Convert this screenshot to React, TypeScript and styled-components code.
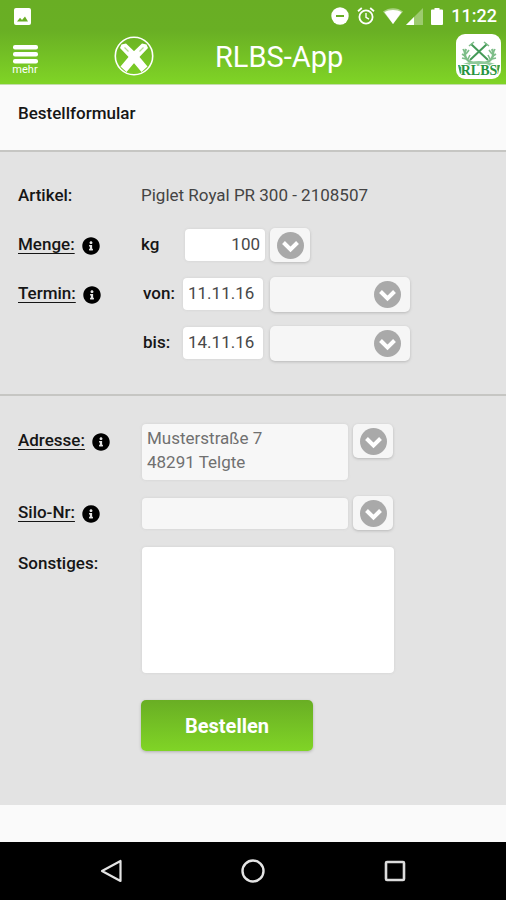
import React from 'react';
import styled, { createGlobalStyle, css } from 'styled-components';
import { FaInfoCircle } from 'react-icons/fa';

const GlobalStyle = createGlobalStyle`
  *, *::before, *::after { box-sizing: border-box; }
  body {
    margin: 0;
    background: #fafafa;
    color: #161616;
    font-family: Roboto, "Liberation Sans", sans-serif;
    font-size: 17px;
    line-height: 24px;
  }
  button, input, select, textarea { font: inherit; color: inherit; }
`;

const Page = styled.div`
  min-height: 100vh;
  display: flex;
  flex-direction: column;
`;

const TopArea = styled.header`
  background: linear-gradient(#69ae24 0, #69af24 36%, #80d426 100%);
  color: #fff;
  border-bottom: 1px solid #c3dcab;
`;

const StatusBar = styled.div`
  height: 32px;
  padding: 0 9px 0 14px;
  display: flex;
  align-items: center;
  justify-content: space-between;
`;

const StatusIcons = styled.div`
  display: flex;
  align-items: center;
  gap: 8px;
  font-size: 18px;
  font-weight: 500;
`;

const SignalGroup = styled.span`
  display: flex;
  gap: 3px;
`;

const AppBar = styled.div`
  height: 52px;
  padding: 0 5px 4px 12px;
  display: flex;
  align-items: center;
`;

const MenuButton = styled.button`
  width: 26px;
  padding: 8px 0 0;
  border: 0;
  background: none;
  color: #fff;
  display: flex;
  flex-direction: column;
  align-items: center;
  font-size: 11px;
  line-height: 11px;
  cursor: pointer;
`;

const Brand = styled.span`
  display: flex;
  margin-left: 76px;
`;

const Title = styled.h1`
  flex: 1;
  margin: 0 0 0 61px;
  padding-top: 1px;
  font-size: 29px;
  line-height: 36px;
  font-weight: 400;
`;

const PageHeading = styled.h2`
  margin: 0;
  padding: 16px 18px 24px;
  height: 65px;
  font-size: 17px;
  line-height: 24px;
  font-weight: 500;
  background: #fafafa;
`;

const Section = styled.section<{ $last?: boolean }>`
  display: flex;
  flex-direction: column;
  align-items: stretch;
  background: #e3e3e3;
  border-top: 2px solid #c6c6c3;
  padding: ${p => (p.$last ? '28px 18px 54px' : '27px 18px 33px')};
  gap: ${p => (p.$last ? '16px' : '14px')};
`;

const Row = styled.div`
  display: grid;
  grid-template-columns: 123px minmax(0, 1fr);
  align-items: start;
`;

const LabelCell = styled.div`
  display: flex;
  align-items: center;
  gap: 7px;
  padding-top: 4px;
`;

const Label = styled.label<{ $linked?: boolean }>`
  font-weight: 500;
  line-height: 24px;
  ${p => p.$linked && css`
    text-decoration: underline;
    text-decoration-thickness: 1px;
    text-underline-offset: 3px;
    text-decoration-skip-ink: none;
  `}
`;

const InfoButton = styled.button`
  display: flex;
  padding: 4px 0 0;
  border: 0;
  background: none;
  color: #000;
  font-size: 18px;
  cursor: pointer;
`;

const Fields = styled.div`
  display: flex;
  align-items: flex-start;
  min-height: 35px;
`;

const Value = styled.span`
  padding-top: 4px;
  color: #444;
`;

const UnitLabel = styled.label`
  width: 42px;
  padding-top: 4px;
  font-weight: 500;
`;

const DateLabel = styled(UnitLabel)`
  padding-left: 2px;
`;

const fieldLook = css`
  border: 0;
  border-radius: 4px;
  outline: 0;
  box-shadow: 0 0 3px #d0d0d0;
  color: #484848;
`;

const TextField = styled.input<{ $right?: boolean }>`
  ${fieldLook}
  width: 80px;
  height: 32px;
  margin: 1px 7px 0 0;
  padding: 0 5px 3px;
  background: #fff;
  text-align: ${p => (p.$right ? 'right' : 'left')};
  ${p => p.$right && css`margin-left: 2px; margin-right: 5px;`}
`;

const ReadOnlyArea = styled.textarea`
  ${fieldLook}
  flex: 0 1 206px;
  min-width: 0;
  height: 56px;
  margin: 0 5px 0 1px;
  padding: 2px 5px;
  background: #f7f7f7;
  color: #707070;
  resize: none;
  overflow: hidden;
`;

const ReadOnlyField = styled.input`
  ${fieldLook}
  flex: 0 1 206px;
  min-width: 0;
  height: 31px;
  margin: 2px 5px 0 1px;
  padding: 0 5px;
  background: #f7f7f7;
`;

const NotesArea = styled.textarea`
  ${fieldLook}
  flex: 0 1 252px;
  min-width: 0;
  height: 126px;
  margin-left: 1px;
  padding: 5px;
  background: #fff;
  resize: none;
`;

const raised = css`
  border: 0;
  border-radius: 5px;
  background: #f6f6f6;
  box-shadow: 0 1px 3px #b8b8b8;
  cursor: pointer;
`;

const ArrowButton = styled.button`
  ${raised}
  width: 40px;
  height: 34px;
  padding: 0;
  display: flex;
  align-items: center;
  justify-content: center;
`;

const SelectWrap = styled.div`
  display: grid;
  align-items: center;
  flex: 0 1 140px;
  > * { grid-area: 1 / 1; }
  > svg { justify-self: end; margin-right: 9px; pointer-events: none; z-index: 1; }
`;

const Select = styled.select`
  ${raised}
  appearance: none;
  width: 100%;
  height: 35px;
  padding: 0 42px 0 8px;
`;

const SubmitButton = styled.button`
  flex: 0 1 172px;
  height: 51px;
  margin-top: 11px;
  border: 0;
  border-radius: 5px;
  background: linear-gradient(#69ae24, #80d426);
  box-shadow: 0 1px 3px #b0b0b0;
  color: #fff;
  font-size: 20px;
  font-weight: 700;
  cursor: pointer;
`;

const BottomStrip = styled.div`
  flex: 1;
  min-height: 20px;
  background: #fafafa;
`;

const NavBar = styled.nav`
  height: 58px;
  background: #000;
  display: flex;
  align-items: center;
  justify-content: center;
  gap: 118px;
`;

const NavButton = styled.button`
  display: flex;
  padding: 0;
  border: 0;
  background: none;
  cursor: pointer;
`;

const ArrowIcon = () => (
  <svg width="27" height="27" viewBox="0 0 27 27" aria-hidden="true">
    <circle cx="13.5" cy="13.5" r="13.5" fill="#a9a9a9" />
    <path d="M6.5 10.5 L13.5 17.5 L20.5 10.5" fill="none" stroke="#fff" strokeWidth="4" />
  </svg>
);

const PictureIcon = () => (
  <svg width="17" height="17" viewBox="0 0 17 17" aria-hidden="true">
    <rect width="17" height="17" rx="2" fill="#fff" />
    <path d="M3 13.5 L6 9.8 L8 12 L11 8.5 L14 13.5 Z" fill="#69ae24" />
  </svg>
);

const DndIcon = () => (
  <svg width="18" height="18" viewBox="0 0 18 18" aria-hidden="true">
    <circle cx="9" cy="9" r="8.7" fill="#fff" />
    <path d="M5 9h8" stroke="#69ae24" strokeWidth="2" />
  </svg>
);

const AlarmIcon = () => (
  <svg width="18" height="18" viewBox="0 0 18 18" fill="none" stroke="#fff" aria-hidden="true">
    <circle cx="9" cy="10" r="6.6" strokeWidth="1.8" />
    <path d="M9 6v4.4l3 1.8" strokeWidth="1.4" />
    <path d="M1 4.2 L4.8 1 M17 4.2 L13.2 1" strokeWidth="1.8" />
  </svg>
);

const WifiIcon = () => (
  <svg width="20" height="16" viewBox="0 0 20 16" aria-hidden="true">
    <path d="M0 3.6 C6 -1 14 -1 20 3.6 L10 16 Z" fill="#fff" fillOpacity=".45" />
    <path d="M1.5 4.2 C6 1.4 14 1.4 18.5 4.2 L10 16 Z" fill="#fff" />
  </svg>
);

const CellIcon = () => (
  <svg width="17" height="17" viewBox="0 0 17 17" aria-hidden="true">
    <path d="M17 0V17H0Z" fill="#fff" fillOpacity=".35" />
    <path d="M8 9V17H0Z" fill="#fff" />
  </svg>
);

const BatteryIcon = () => (
  <svg width="12" height="17" viewBox="0 0 12 17" aria-hidden="true">
    <path d="M3.5 0h5v1.6H11a1 1 0 0 1 1 1V16a1 1 0 0 1-1 1H1a1 1 0 0 1-1-1V2.6a1 1 0 0 1 1-1h2.5z" fill="#fff" />
  </svg>
);

const BarsIcon = () => (
  <svg width="25" height="19" viewBox="0 0 25 19" aria-hidden="true">
    {[0, 7, 14].map(y => (
      <rect key={y} y={y} width="25" height="4.5" rx="2" fill="#fff" />
    ))}
  </svg>
);

const CrossedBeamsIcon = () => (
  <svg width="40" height="40" viewBox="0 0 40 40" aria-hidden="true">
    <circle cx="20" cy="20" r="18.7" fill="none" stroke="#fff" strokeWidth="1.6" />
    <g fill="#fff">
      <path d="M6 12 L7.5 8.5 L12 7.500 L23 18 L33.500 30.500 L27.500 36 L16.500 23 Z" />
      <path d="M34 12 L32.500 8.500 L28 7.500 L17 18 L6.500 30.500 L12.500 36 L23.500 23 Z" />
    </g>
    <path d="M10.500 11.500 L14.500 15.500 M29.500 11.500 L25.500 15.500" stroke="#b5de8e" strokeWidth="1.200" />
  </svg>
);

const RlbsBadge = () => (
  <svg width="45" height="45" viewBox="0 0 45 45" role="img" aria-label="RLBS">
    <rect width="45" height="45" rx="9" fill="#fff" />
    <g fill="none" stroke="#7dbd88">
      <path d="M15 10 L32 26 M31 10 L14 26" strokeWidth="2" stroke="#459a58" />
      <path d="M13 12 L18 8 M33 12 L28 8" strokeWidth="1.6" />
      <path d="M10 15 C7 21 10 27 17 29 M36 15 C39 21 36 27 29 29" strokeWidth="2.4" />
      <path
        d="M9 19 l-2-4 M9 22 l-3-2 M10 25 l-4-1 M10 20 l3-4 M12 25 l2-4 M37 19 l2-4 M37 22 l3-2 M36 25 l4-1 M36 20 l-3-4 M34 25 l-2-4"
        strokeWidth="1.6"
      />
    </g>
    <path d="M2 31 H7 V40 H4 Z M39 31 H44 L42 40 H39 Z" fill="#35a04c" />
    <path d="M7 30 C17 26 29 26 39 30 V32 H7 Z" fill="#8fc99a" />
    <text
      x="23"
      y="41"
      textAnchor="middle"
      fontFamily="Liberation Serif, serif"
      fontSize="14"
      fontWeight="700"
      fill="#279340"
      stroke="#fff"
      strokeWidth="2"
      paintOrder="stroke"
    >
      RLBS
    </text>
  </svg>
);

const Info = ({ topic }: { topic: string }) => (
  <InfoButton type="button" aria-label={`Info ${topic}`}>
    <FaInfoCircle />
  </InfoButton>
);

const TimeSelect = ({ name }: { name: string }) => (
  <SelectWrap>
    <Select aria-label={name} defaultValue="">
      <option value="" />
    </Select>
    <ArrowIcon />
  </SelectWrap>
);

export default function App() {
  return (
    <>
      <GlobalStyle />
      <Page>
        <TopArea>
          <StatusBar>
            <PictureIcon />
            <StatusIcons>
              <DndIcon />
              <AlarmIcon />
              <SignalGroup>
                <WifiIcon />
                <CellIcon />
              </SignalGroup>
              <BatteryIcon />
              <span>11:22</span>
            </StatusIcons>
          </StatusBar>
          <AppBar>
            <MenuButton type="button">
              <BarsIcon />
              mehr
            </MenuButton>
            <Brand><CrossedBeamsIcon /></Brand>
            <Title>RLBS-App</Title>
            <RlbsBadge />
          </AppBar>
        </TopArea>

        <PageHeading>Bestellformular</PageHeading>

        <form onSubmit={e => e.preventDefault()}>
          <Section>
            <Row>
              <LabelCell><Label as="span">Artikel:</Label></LabelCell>
              <Fields><Value>Piglet Royal PR 300 - 2108507</Value></Fields>
            </Row>
            <Row>
              <LabelCell>
                <Label $linked htmlFor="menge">Menge:</Label>
                <Info topic="Menge" />
              </LabelCell>
              <Fields>
                <UnitLabel htmlFor="menge">kg</UnitLabel>
                <TextField id="menge" $right defaultValue="100" />
                <ArrowButton type="button" aria-label="Menge wählen"><ArrowIcon /></ArrowButton>
              </Fields>
            </Row>
            <Row>
              <LabelCell>
                <Label $linked htmlFor="von">Termin:</Label>
                <Info topic="Termin" />
              </LabelCell>
              <Fields>
                <DateLabel htmlFor="von">von:</DateLabel>
                <TextField id="von" defaultValue="11.11.16" />
                <TimeSelect name="Uhrzeit von" />
              </Fields>
            </Row>
            <Row>
              <span />
              <Fields>
                <DateLabel htmlFor="bis">bis:</DateLabel>
                <TextField id="bis" defaultValue="14.11.16" />
                <TimeSelect name="Uhrzeit bis" />
              </Fields>
            </Row>
          </Section>

          <Section $last>
            <Row>
              <LabelCell>
                <Label $linked htmlFor="adresse">Adresse:</Label>
                <Info topic="Adresse" />
              </LabelCell>
              <Fields>
                <ReadOnlyArea id="adresse" readOnly value={'Musterstraße 7\n48291 Telgte'} />
                <ArrowButton type="button" aria-label="Adresse wählen"><ArrowIcon /></ArrowButton>
              </Fields>
            </Row>
            <Row>
              <LabelCell>
                <Label $linked htmlFor="silo">Silo-Nr:</Label>
                <Info topic="Silo-Nr" />
              </LabelCell>
              <Fields>
                <ReadOnlyField id="silo" readOnly />
                <ArrowButton type="button" aria-label="Silo wählen"><ArrowIcon /></ArrowButton>
              </Fields>
            </Row>
            <Row>
              <LabelCell><Label htmlFor="sonstiges">Sonstiges:</Label></LabelCell>
              <Fields><NotesArea id="sonstiges" /></Fields>
            </Row>
            <Row>
              <span />
              <Fields><SubmitButton type="submit">Bestellen</SubmitButton></Fields>
            </Row>
          </Section>
        </form>

        <BottomStrip />

        <NavBar aria-label="System">
          <NavButton type="button" aria-label="Zurück">
            <svg width="24" height="24" viewBox="0 0 24 24" aria-hidden="true">
              <path d="M21.5 2 V22 L3 12 Z" fill="none" stroke="#e4e4e4" strokeWidth="2.2" strokeLinejoin="round" />
            </svg>
          </NavButton>
          <NavButton type="button" aria-label="Startseite">
            <svg width="24" height="24" viewBox="0 0 24 24" aria-hidden="true">
              <circle cx="12" cy="12" r="10.5" fill="none" stroke="#e4e4e4" strokeWidth="2.4" />
            </svg>
          </NavButton>
          <NavButton type="button" aria-label="Übersicht">
            <svg width="24" height="24" viewBox="0 0 24 24" aria-hidden="true">
              <rect x="3" y="3" width="18" height="18" rx="1" fill="none" stroke="#dcdcdc" strokeWidth="2.6" />
            </svg>
          </NavButton>
        </NavBar>
      </Page>
    </>
  );
}
